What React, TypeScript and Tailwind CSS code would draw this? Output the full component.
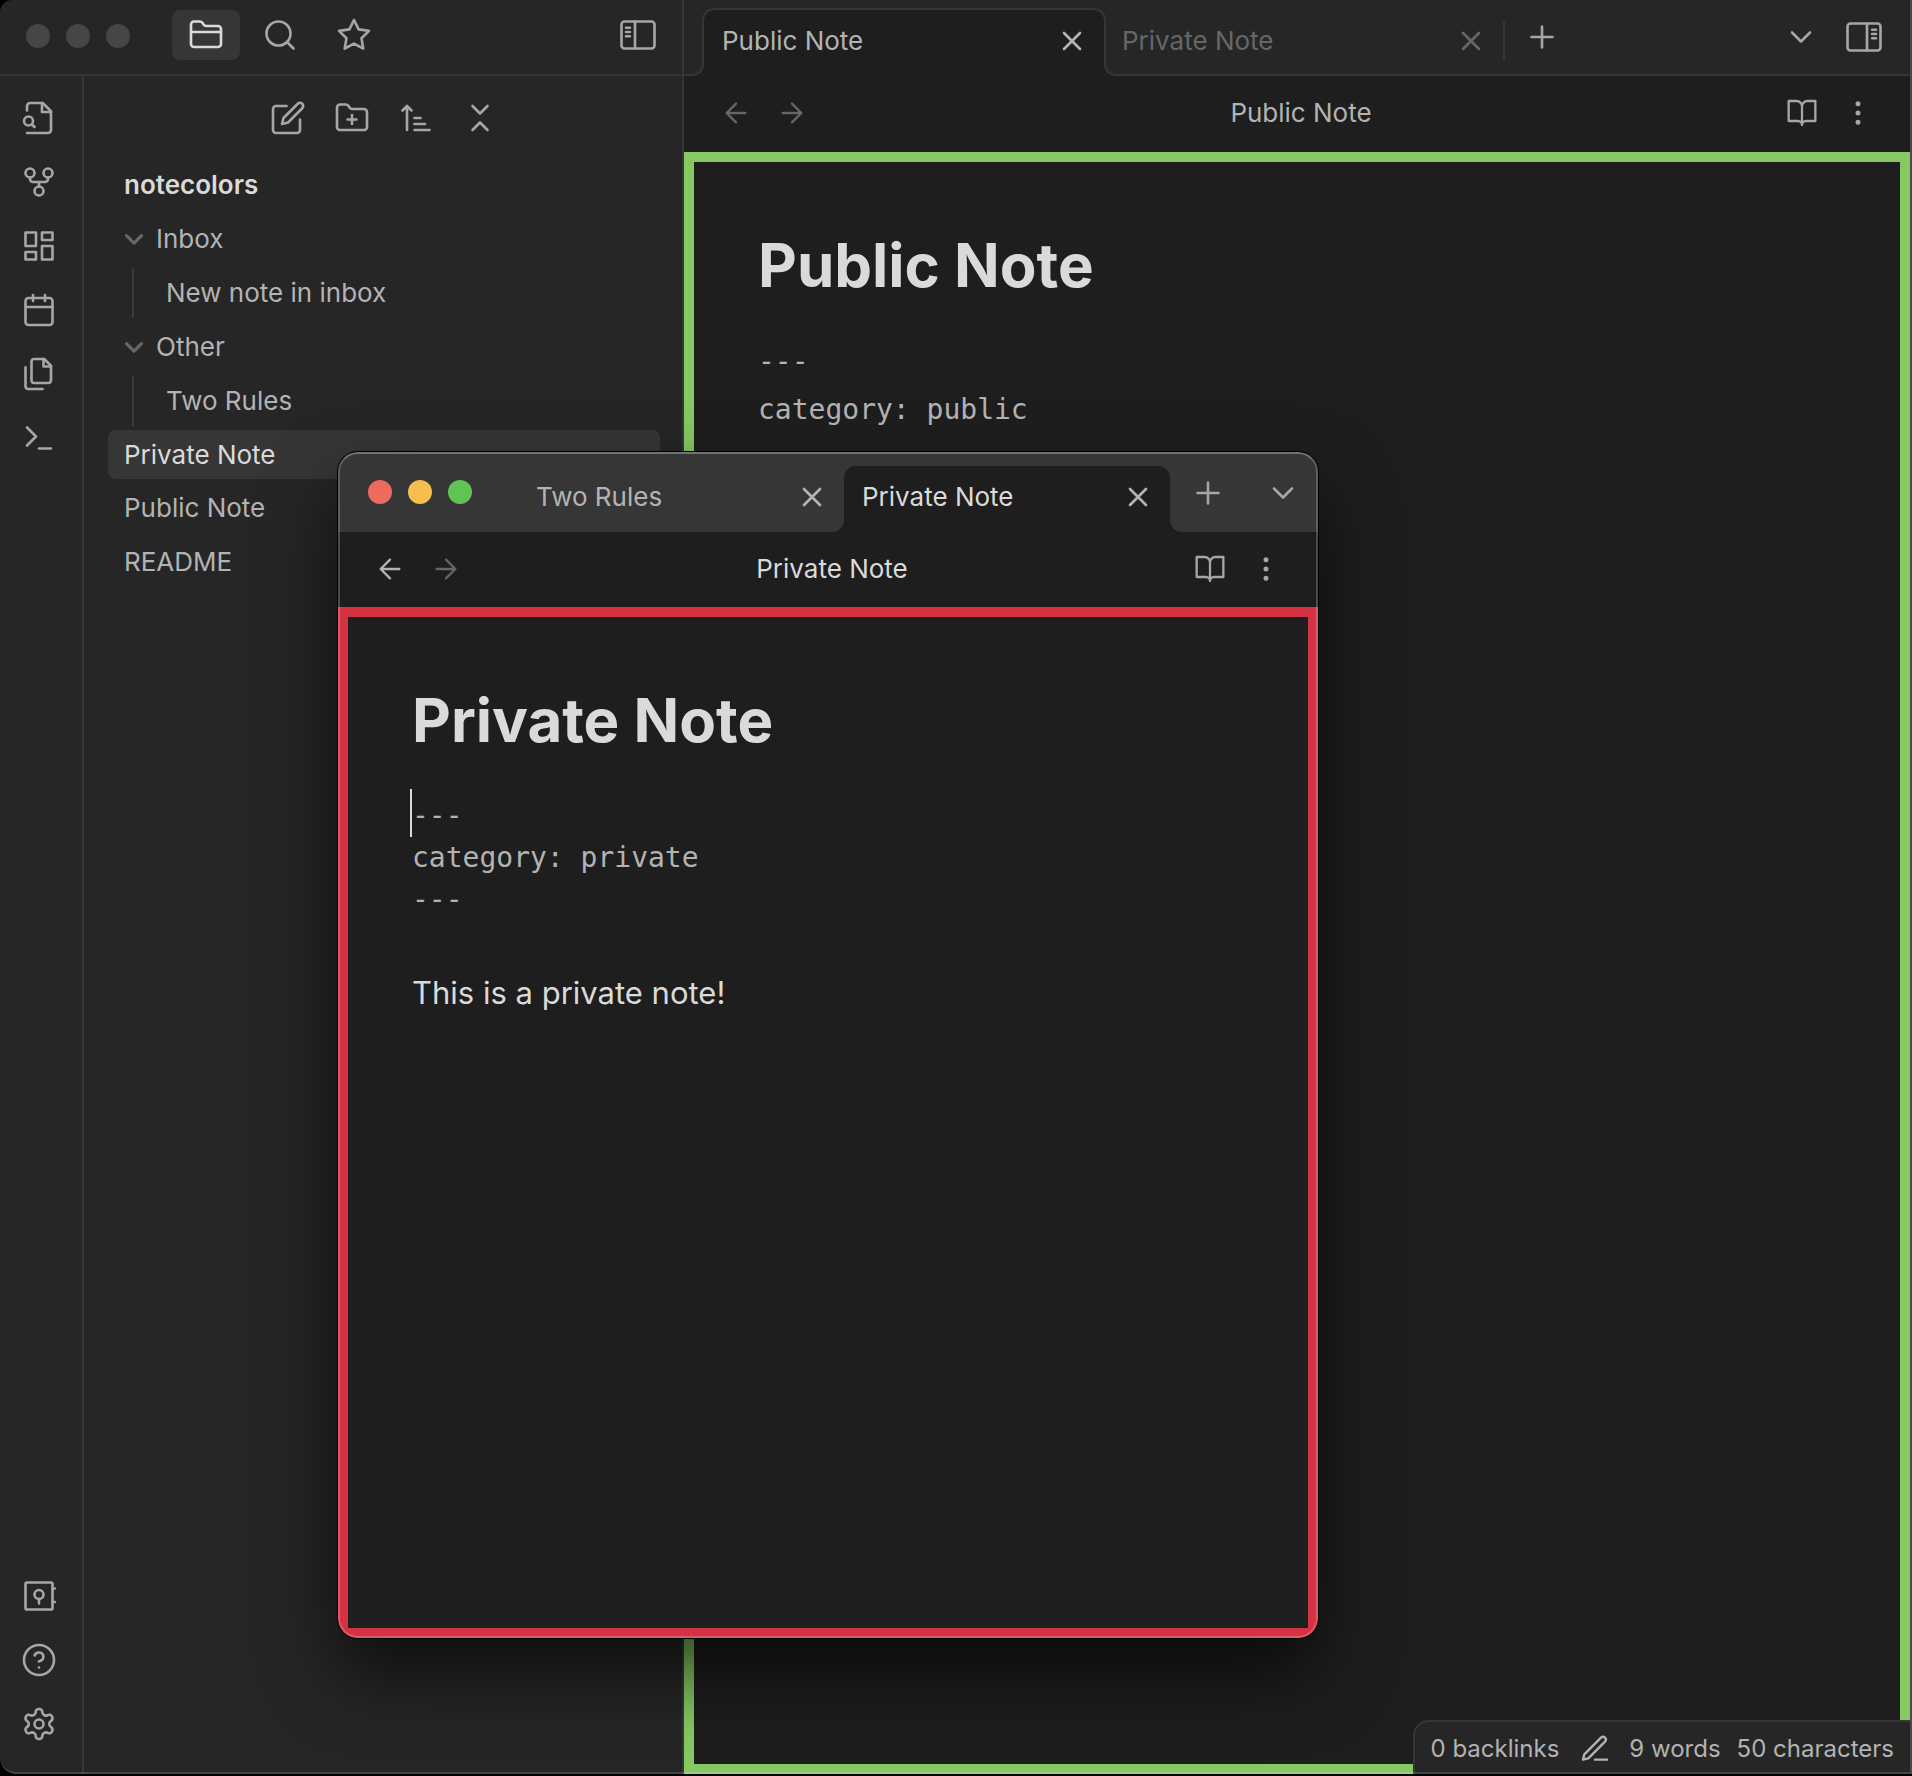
import type { ReactNode } from "react";

type IconProps = { size?: string; stroke?: number; children: ReactNode };

function Icon({ size = "size-9", stroke = 1.75, children }: IconProps) {
  return (
    <svg
      className={`${size} shrink-0`}
      viewBox="0 0 24 24"
      fill="none"
      stroke="currentColor"
      strokeWidth={stroke}
      strokeLinecap="round"
      strokeLinejoin="round"
      aria-hidden="true"
    >
      {children}
    </svg>
  );
}

const FOLDER =
  "M20 20a2 2 0 0 0 2-2V8a2 2 0 0 0-2-2h-7.9a2 2 0 0 1-1.69-.9L9.6 3.9A2 2 0 0 0 7.93 3H4a2 2 0 0 0-2 2v13a2 2 0 0 0 2 2Z";

const FolderClosed = () => (
  <Icon>
    <path d={FOLDER} />
    <path d="M2 10h20" />
  </Icon>
);
const FolderPlus = () => (
  <Icon>
    <path d={FOLDER} />
    <path d="M12 10v6M9 13h6" />
  </Icon>
);
const Search = () => (
  <Icon>
    <circle cx="11" cy="11" r="8" />
    <path d="m21 21-4.35-4.35" />
  </Icon>
);
const Star = () => (
  <Icon>
    <path d="m12 2 3.09 6.26L22 9.27l-5 4.87 1.18 6.88L12 17.77l-6.18 3.25L7 14.14 2 9.27l6.91-1.01Z" />
  </Icon>
);
const PanelLeft = () => (
  <Icon>
    <rect x="1" y="3" width="22" height="18" rx="2" />
    <path d="M10 3v18M4 7.2h2.6M4 10h2.6M4 12.8h2.6" />
  </Icon>
);
const PanelRight = () => (
  <Icon>
    <rect x="1" y="3" width="22" height="18" rx="2" />
    <path d="M14 3v18M17.4 7.2H20M17.4 10H20M17.4 12.8H20" />
  </Icon>
);
const FileSearch = () => (
  <Icon>
    <path d="M4 22h14a2 2 0 0 0 2-2V7.5L14.5 2H6a2 2 0 0 0-2 2v3" />
    <path d="M14 2v6h6" />
    <circle cx="5" cy="14" r="3" />
    <path d="m9 18-1.5-1.5" />
  </Icon>
);
const GitFork = () => (
  <Icon>
    <circle cx="12" cy="18" r="3" />
    <circle cx="6" cy="6" r="3" />
    <circle cx="18" cy="6" r="3" />
    <path d="M18 9v1a2 2 0 0 1-2 2H8a2 2 0 0 1-2-2V9M12 12v3" />
  </Icon>
);
const Dashboard = () => (
  <Icon>
    <path d="M3 3h7v9H3zM14 3h7v5h-7zM14 12h7v9h-7zM3 16h7v5H3z" />
  </Icon>
);
const Calendar = () => (
  <Icon>
    <rect x="3" y="4" width="18" height="18" rx="2" />
    <path d="M16 2v4M8 2v4M3 10h18" />
  </Icon>
);
const Files = () => (
  <Icon>
    <path d="M15.5 2H8.6c-.4 0-.8.2-1.1.5-.3.3-.5.7-.5 1.1v12.8c0 .4.2.8.5 1.1.3.3.7.5 1.1.5h9.8c.4 0 .8-.2 1.1-.5.3-.3.5-.7.5-1.1V6.5L15.5 2z" />
    <path d="M3 7.6v12.8c0 .4.2.8.5 1.1.3.3.7.5 1.1.5h9.8" />
    <path d="M15 2v5h5" />
  </Icon>
);
const Terminal = () => (
  <Icon>
    <path d="m4 17 6-6-6-6M12 19h8" />
  </Icon>
);
const Vault = () => (
  <Icon>
    <rect x="3" y="3" width="18" height="18" rx="1" />
    <circle cx="12" cy="11" r="3" />
    <path d="M12 14v3M21 7h1.5M21 16h1.5" />
  </Icon>
);
const Help = () => (
  <Icon>
    <circle cx="12" cy="12" r="10" />
    <path d="M9.09 9a3 3 0 0 1 5.83 1c0 2-3 3-3 3M12 17h.01" />
  </Icon>
);
const Settings = () => (
  <Icon>
    <path d="M12.22 2h-.44a2 2 0 0 0-2 2v.18a2 2 0 0 1-1 1.73l-.43.25a2 2 0 0 1-2 0l-.15-.08a2 2 0 0 0-2.73.73l-.22.38a2 2 0 0 0 .73 2.73l.15.1a2 2 0 0 1 1 1.72v.51a2 2 0 0 1-1 1.74l-.15.09a2 2 0 0 0-.73 2.73l.22.38a2 2 0 0 0 2.73.73l.15-.08a2 2 0 0 1 2 0l.43.25a2 2 0 0 1 1 1.73V20a2 2 0 0 0 2 2h.44a2 2 0 0 0 2-2v-.18a2 2 0 0 1 1-1.73l.43-.25a2 2 0 0 1 2 0l.15.08a2 2 0 0 0 2.73-.73l.22-.39a2 2 0 0 0-.73-2.73l-.15-.08a2 2 0 0 1-1-1.74v-.5a2 2 0 0 1 1-1.74l.15-.09a2 2 0 0 0 .73-2.73l-.22-.38a2 2 0 0 0-2.73-.73l-.15.08a2 2 0 0 1-2 0l-.43-.25a2 2 0 0 1-1-1.73V4a2 2 0 0 0-2-2z" />
    <circle cx="12" cy="12" r="3" />
  </Icon>
);
const Edit = () => (
  <Icon>
    <path d="M11 4H4a2 2 0 0 0-2 2v14a2 2 0 0 0 2 2h14a2 2 0 0 0 2-2v-7" />
    <path d="M18.5 2.5a2.121 2.121 0 0 1 3 3L12 15l-4 1 1-4 9.5-9.5z" />
  </Icon>
);
const SortAsc = () => (
  <Icon>
    <path d="m3 7 3-3 3 3M6 4v16M11 12h4M11 16h7M11 20h10" />
  </Icon>
);
const Collapse = () => (
  <Icon>
    <path d="m7 20 5-5 5 5M7 4l5 5 5-5" />
  </Icon>
);
const Close = () => (
  <Icon size="size-8" stroke={2}>
    <path d="M18 6 6 18M6 6l12 12" />
  </Icon>
);
const Plus = () => (
  <Icon>
    <path d="M5 12h14M12 5v14" />
  </Icon>
);
const ChevronDown = () => (
  <Icon>
    <path d="m6 9 6 6 6-6" />
  </Icon>
);
const FoldArrow = () => (
  <Icon size="size-5" stroke={4}>
    <path d="m3 8 9 9 9-9" />
  </Icon>
);
const ArrowLeft = () => (
  <Icon size="size-8">
    <path d="m12 19-7-7 7-7M19 12H5" />
  </Icon>
);
const ArrowRight = () => (
  <Icon size="size-8">
    <path d="M5 12h14M12 5l7 7-7 7" />
  </Icon>
);
const Book = () => (
  <Icon size="size-8">
    <path d="M2 3h6a4 4 0 0 1 4 4v14a3 3 0 0 0-3-3H2zM22 3h-6a4 4 0 0 0-4 4v14a3 3 0 0 1 3-3h7z" />
  </Icon>
);
const Dots = () => (
  <Icon size="size-8">
    <g fill="currentColor">
      <circle cx="12" cy="12" r="1" />
      <circle cx="12" cy="5" r="1" />
      <circle cx="12" cy="19" r="1" />
    </g>
  </Icon>
);
const Pen = () => (
  <Icon size="size-8">
    <path d="M12 20h9" />
    <path d="M16.5 3.5a2.12 2.12 0 0 1 3 3L7 19l-4 1 1-4Z" />
  </Icon>
);

function IconButton({ label, className = "", children }: { label: string; className?: string; children: ReactNode }) {
  return (
    <button type="button" aria-label={label} className={`flex items-center justify-center ${className}`}>
      {children}
    </button>
  );
}

function ViewHeader({
  title,
  heightClass,
  backClass,
  titleClass,
}: {
  title: string;
  heightClass: string;
  backClass: string;
  titleClass: string;
}) {
  return (
    <div className={`flex shrink-0 items-center px-6 pb-0.5 ${heightClass}`}>
      <IconButton label="Back" className={`h-12 w-14 ${backClass}`}>
        <ArrowLeft />
      </IconButton>
      <IconButton label="Forward" className="h-12 w-14 text-[#666666]">
        <ArrowRight />
      </IconButton>
      <div className={`flex-1 pl-2 text-center ${titleClass}`}>{title}</div>
      <IconButton label="Reading view" className="h-12 w-14 text-[#a6a6a6]">
        <Book />
      </IconButton>
      <IconButton label="More options" className="h-12 w-14 text-[#a6a6a6]">
        <Dots />
      </IconButton>
    </div>
  );
}

const ribbonTop = [
  { label: "Quick switcher", icon: <FileSearch /> },
  { label: "Graph view", icon: <GitFork /> },
  { label: "Canvas", icon: <Dashboard /> },
  { label: "Daily note", icon: <Calendar /> },
  { label: "Templates", icon: <Files /> },
  { label: "Command palette", icon: <Terminal /> },
];
const ribbonBottom = [
  { label: "Open another vault", icon: <Vault /> },
  { label: "Help", icon: <Help /> },
  { label: "Settings", icon: <Settings /> },
];

function Folder({ name, note }: { name: string; note: string }) {
  return (
    <li>
      <button type="button" className="mb-1 flex h-[50px] w-full items-center gap-3 pl-4">
        <span className="flex text-[#666666]">
          <FoldArrow />
        </span>
        {name}
      </button>
      <ul className="mb-1 ml-6 border-l-2 border-[#3a3a3a]">
        <li>
          <button type="button" className="flex h-[50px] w-full items-center pl-8">
            {note}
          </button>
        </li>
      </ul>
    </li>
  );
}

function Sidebar() {
  return (
    <aside className="flex w-[684px] shrink-0 flex-col border-r-2 border-[#363636] bg-[#262626] text-[#a6a6a6]">
      <div className="flex h-[76px] shrink-0 items-center border-b-2 border-[#363636] px-[26px] pb-1">
        <div className="mr-[42px] flex gap-4 pt-0.5">
          <span className="size-6 rounded-full bg-[#464646]" />
          <span className="size-6 rounded-full bg-[#464646]" />
          <span className="size-6 rounded-full bg-[#464646]" />
        </div>
        <IconButton label="Files" className="h-[50px] w-[68px] rounded-lg bg-[#363636] text-[#dadada]">
          <FolderClosed />
        </IconButton>
        <IconButton label="Search" className="ml-1.5 h-[50px] w-[68px]">
          <Search />
        </IconButton>
        <IconButton label="Starred" className="ml-1.5 h-[50px] w-[68px]">
          <Star />
        </IconButton>
        <IconButton label="Collapse left sidebar" className="ml-auto h-[50px]">
          <PanelLeft />
        </IconButton>
      </div>
      <div className="flex flex-1">
        <nav className="flex w-[84px] shrink-0 flex-col items-center border-r-2 border-[#363636] pt-2.5 pr-1 pb-[18px]">
          {ribbonTop.map((r) => (
            <IconButton key={r.label} label={r.label} className="h-16 w-14">
              {r.icon}
            </IconButton>
          ))}
          <div className="flex-1" />
          {ribbonBottom.map((r) => (
            <IconButton key={r.label} label={r.label} className="h-16 w-14">
              {r.icon}
            </IconButton>
          ))}
        </nav>
        <div className="flex-1 pr-[22px] pl-6">
          <div className="flex justify-center pt-2.5 pb-[18px]">
            <IconButton label="New note" className="size-16">
              <Edit />
            </IconButton>
            <IconButton label="New folder" className="size-16">
              <FolderPlus />
            </IconButton>
            <IconButton label="Change sort order" className="size-16">
              <SortAsc />
            </IconButton>
            <IconButton label="Collapse all" className="size-16">
              <Collapse />
            </IconButton>
          </div>
          <div className="flex h-[34px] items-center pl-4 font-semibold text-[#dadada]">notecolors</div>
          <ul className="mt-3 text-[#b3b3b3]">
            <Folder name="Inbox" note="New note in inbox" />
            <Folder name="Other" note="Two Rules" />
            <li>
              <button type="button" className="mb-1 flex h-[49px] w-full items-center rounded-lg bg-[#363636] pl-4 text-[#dadada]">
                Private Note
              </button>
            </li>
            <li>
              <button type="button" className="mb-1 flex h-[50px] w-full items-center pl-4">
                Public Note
              </button>
            </li>
            <li>
              <button type="button" className="flex h-[50px] w-full items-center pl-4">
                README
              </button>
            </li>
          </ul>
        </div>
      </div>
    </aside>
  );
}

function MainPane() {
  return (
    <main className="relative flex min-w-0 flex-1 flex-col bg-[#1e1e1e]">
      <div className="flex h-[76px] shrink-0 items-end border-b-2 border-[#363636] bg-[#262626] pr-7 pl-[18px] text-[#a6a6a6]">
        <div className="relative -mb-0.5 flex h-[68px] w-[404px] items-center justify-between rounded-t-xl border-2 border-b-0 border-[#363636] bg-[#1e1e1e] pr-4 pb-1 pl-[18px] text-[#b3b3b3]">
          <span className="absolute right-full bottom-0 size-3.5 bg-[#1e1e1e]">
            <span className="block size-full rounded-br-xl border-r-2 border-b-2 border-[#363636] bg-[#262626]" />
          </span>
          <span className="absolute bottom-0 left-full size-3.5 bg-[#1e1e1e]">
            <span className="block size-full rounded-bl-xl border-b-2 border-l-2 border-[#363636] bg-[#262626]" />
          </span>
          <button type="button">Public Note</button>
          <IconButton label="Close Public Note">
            <Close />
          </IconButton>
        </div>
        <div className="flex h-[66px] w-[397px] items-center justify-between pr-4 pl-4 text-[#666666]">
          <button type="button">Private Note</button>
          <IconButton label="Close Private Note">
            <Close />
          </IconButton>
        </div>
        <div className="flex h-full flex-1 items-center">
          <span className="mt-2 h-10 w-0.5 bg-[#363636]" />
          <IconButton label="New tab" className="ml-3 size-[50px]">
            <Plus />
          </IconButton>
          <IconButton label="Tab list" className="ml-auto size-[50px]">
            <ChevronDown />
          </IconButton>
          <IconButton label="Collapse right sidebar" className="ml-5 h-[50px]">
            <PanelRight />
          </IconButton>
        </div>
      </div>
      <ViewHeader title="Public Note" heightClass="h-[76px]" backClass="text-[#666666]" titleClass="text-[#b3b3b3]" />
      <article className="flex-1 border-10 border-[#86c962] px-16 pt-16">
        <h1 className="text-[60px] leading-[78px] font-bold text-[#dadada]">Public Note</h1>
        <div className="mt-[34px] font-['DejaVu_Sans_Mono',monospace] text-[28px] leading-12 text-[#b3b3b3]">
          <p>---</p>
          <p>category: public</p>
        </div>
      </article>
      <footer className="absolute right-0 bottom-0 flex h-[54px] items-center rounded-tl-2xl border-t-2 border-l-2 border-[#363636] bg-[#262626] px-4 pt-0.5 text-[24px] text-[#b3b3b3]">
        <span>0 backlinks</span>
        <span className="mr-[18px] ml-5">
          <Pen />
        </span>
        <span>9 words</span>
        <span className="ml-4">50 characters</span>
      </footer>
    </main>
  );
}

function PopoutWindow() {
  return (
    <section
      aria-label="Private Note window"
      className="absolute top-[452px] left-[338px] flex h-[1186px] w-[980px] flex-col overflow-hidden rounded-[20px] bg-[#1e1e1e] shadow-[0_0_0_1px_#000,0_36px_76px_rgba(0,0,0,0.65)]"
    >
      <div className="flex h-20 shrink-0 items-end bg-[#363636] pl-[30px] text-[#a6a6a6]">
        <div className="mr-[46px] flex h-full items-center gap-4">
          <span className="size-6 rounded-full bg-[#ed6a5e]" />
          <span className="size-6 rounded-full bg-[#f4bf4f]" />
          <span className="size-6 rounded-full bg-[#61c554]" />
        </div>
        <div className="flex h-[66px] w-[326px] items-center justify-between pr-4 pb-1 pl-[18px] text-[#b3b3b3]">
          <button type="button">Two Rules</button>
          <IconButton label="Close Two Rules">
            <Close />
          </IconButton>
        </div>
        <div className="relative flex h-[66px] w-[326px] items-center justify-between rounded-t-xl bg-[#1e1e1e] pr-4 pb-1 pl-[18px] text-[#dadada]">
          <span className="absolute right-full bottom-0 size-3 bg-[#1e1e1e]">
            <span className="block size-full rounded-br-xl bg-[#363636]" />
          </span>
          <span className="absolute bottom-0 left-full size-3 bg-[#1e1e1e]">
            <span className="block size-full rounded-bl-xl bg-[#363636]" />
          </span>
          <button type="button">Private Note</button>
          <IconButton label="Close Private Note" className="text-[#b3b3b3]">
            <Close />
          </IconButton>
        </div>
        <div className="flex h-full flex-1 items-center justify-between px-[10px] pt-0.5 pl-[13px]">
          <IconButton label="New tab" className="size-[50px]">
            <Plus />
          </IconButton>
          <IconButton label="Tab list" className="size-[50px]">
            <ChevronDown />
          </IconButton>
        </div>
      </div>
      <ViewHeader title="Private Note" heightClass="h-[75px]" backClass="text-[#b3b3b3]" titleClass="text-[#dadada]" />
      <article className="flex-1 border-10 border-[#d53343] px-16 pt-16">
        <h1 className="text-[60px] leading-[78px] font-bold text-[#dadada]">Private Note</h1>
        <div className="relative mt-9 font-['DejaVu_Sans_Mono',monospace] text-[28px] leading-[42px] text-[#b3b3b3]">
          <span className="absolute -top-1.5 -left-0.5 h-12 w-0.5 bg-[#dadada]" />
          <p>---</p>
          <p>category: private</p>
          <p>---</p>
        </div>
        <p className="mt-12 text-[31px] leading-12 text-[#dadada]">This is a private note!</p>
      </article>
      <div className="pointer-events-none absolute inset-0 rounded-[20px] border-2 border-white/20 border-t-white/30" />
    </section>
  );
}

export default function App() {
  return (
    <div className="relative min-h-screen bg-black pb-0.5 font-[Inter,sans-serif] text-[26px] leading-9">
      <div className="relative flex min-h-[calc(100vh-2px)] overflow-hidden rounded-tl-xl rounded-bl-2xl border-r-2 border-[#4a4a4d]">
        <Sidebar />
        <MainPane />
        <div className="pointer-events-none absolute inset-0 rounded-bl-2xl border-b-2 border-white/15" />
      </div>
      <PopoutWindow />
    </div>
  );
}
